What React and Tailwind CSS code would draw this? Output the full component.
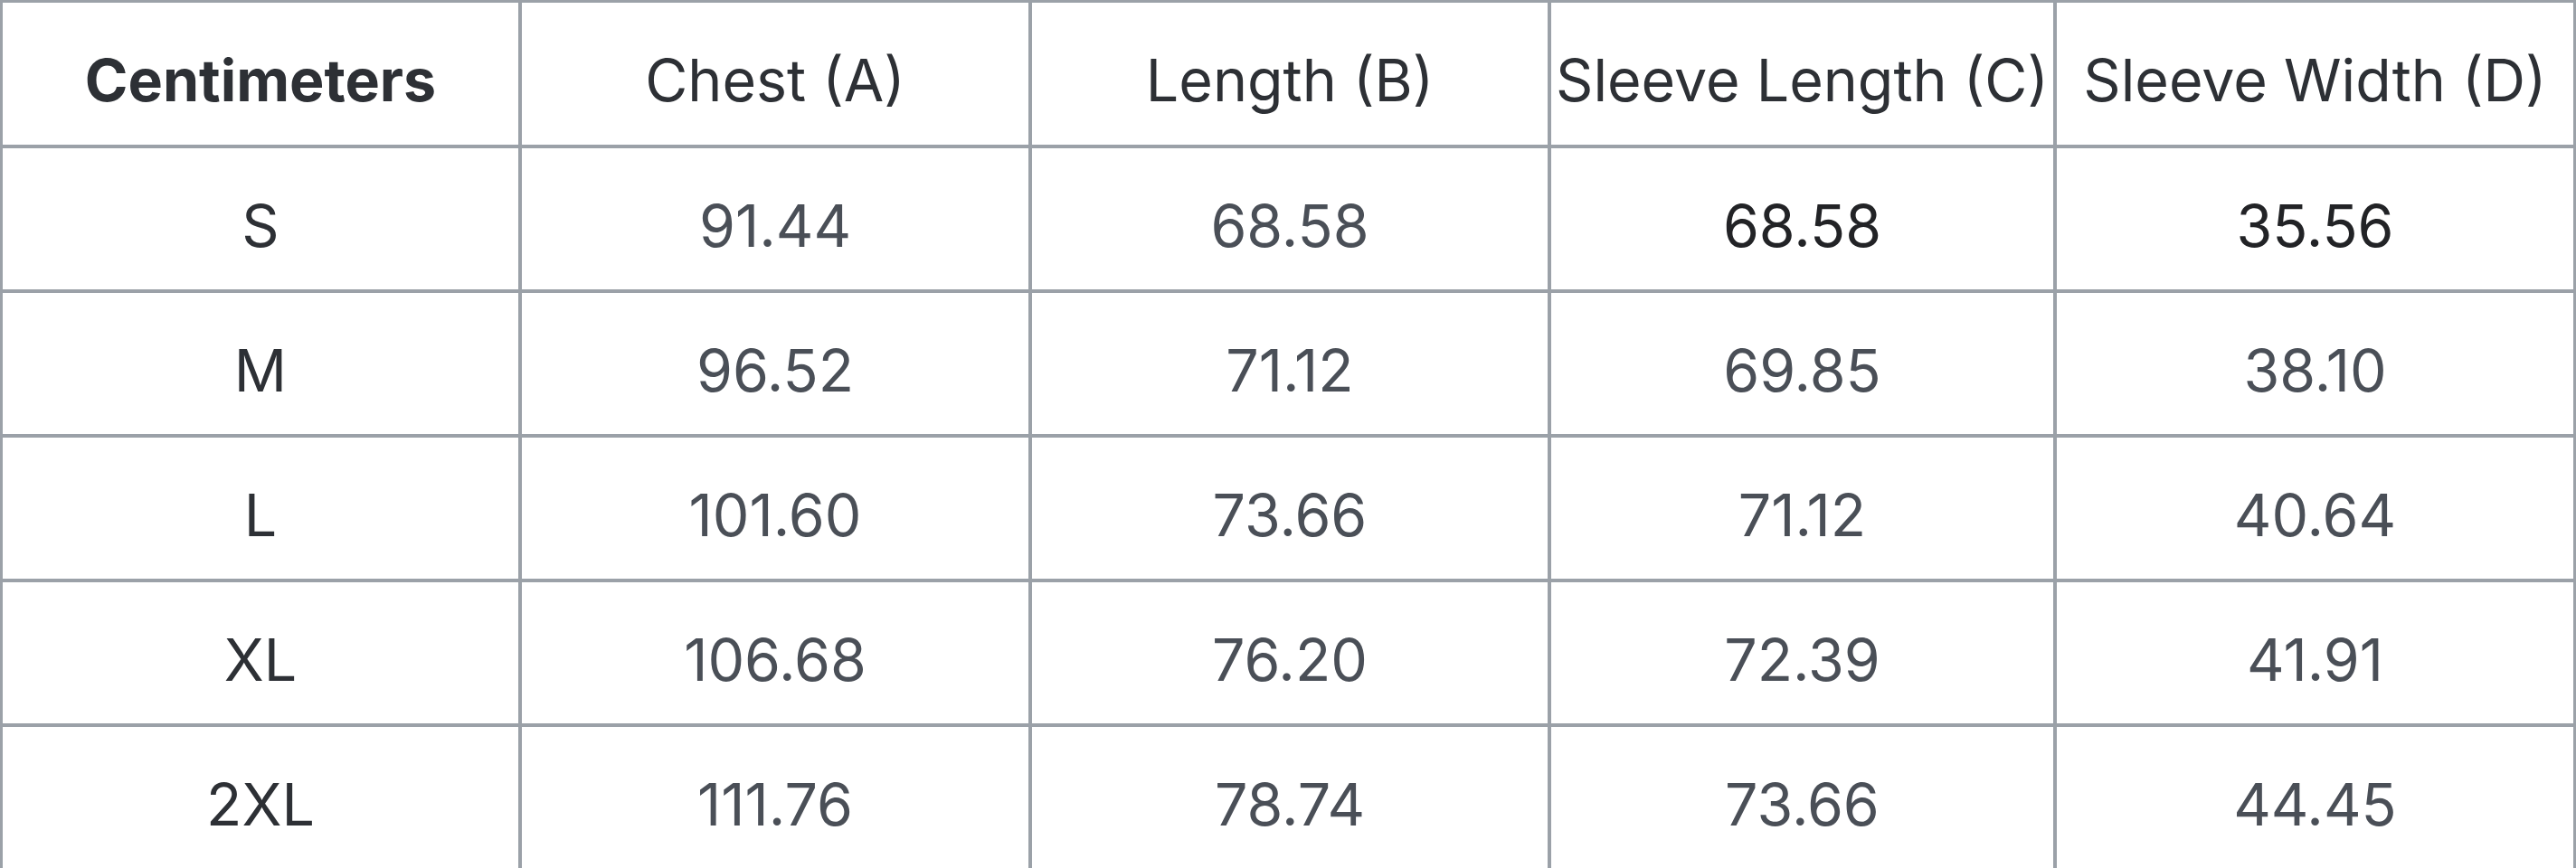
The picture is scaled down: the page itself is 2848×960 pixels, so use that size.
export default function App() {
  const headers = ["Chest (A)", "Length (B)", "Sleeve Length (C)", "Sleeve Width (D)"];
  const rows = [
    ["S", "91.44", "68.58", "68.58", "35.56"],
    ["M", "96.52", "71.12", "69.85", "38.10"],
    ["L", "101.60", "73.66", "71.12", "40.64"],
    ["XL", "106.68", "76.20", "72.39", "41.91"],
    ["2XL", "111.76", "78.74", "73.66", "44.45"],
  ];
  return (
    <div
      className="w-[2848px] h-[960px] bg-[#9ba1a8] pt-[3px] pl-[3px] pr-[3px] pb-[4px] grid grid-cols-[570px_560px_570px_555px_571px] grid-rows-[157px_156px_156px_156px_156px_156px] gap-[4px] text-[64.5px]"
      style={{ fontFamily: "Inter, 'Noto Sans', sans-serif" }}
    >
      <div className="bg-white flex items-center justify-center pt-[16px] font-bold text-[#2d3035]">Centimeters</div>
      {headers.map((h) => (
        <div key={h} className="bg-white flex items-center justify-center pt-[16px] text-[#2d3035] whitespace-nowrap">
          {h}
        </div>
      ))}
      {rows.map((r, ri) =>
        r.map((c, ci) => (
          <div
            key={ri + "-" + ci}
            className={
              "bg-white flex items-center justify-center pt-[16px] " +
              (ci === 0
                ? "text-[#2d3035]"
                : ri === 0 && ci >= 3
                ? "text-[#222326]"
                : "text-[#4a4f57]")
            }
          >
            {c}
          </div>
        ))
      )}
    </div>
  );
}
